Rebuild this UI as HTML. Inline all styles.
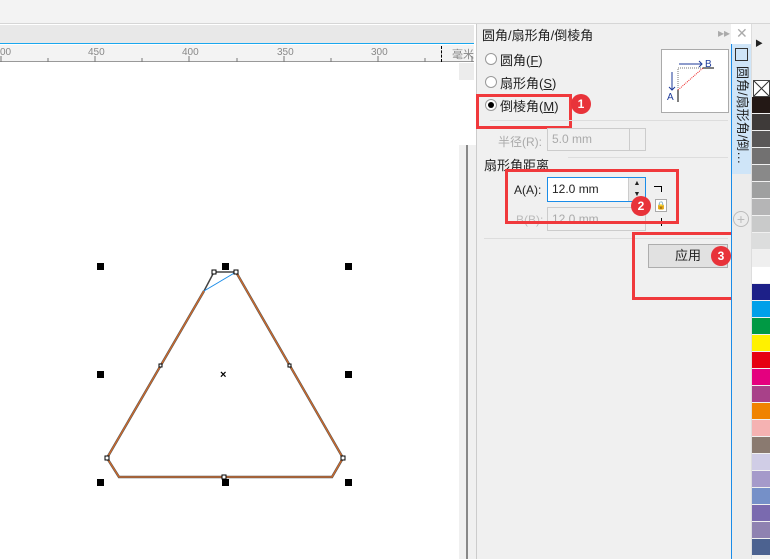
<!DOCTYPE html>
<html><head><meta charset="utf-8"><style>
*{margin:0;padding:0;box-sizing:border-box}
body{width:770px;height:559px;overflow:hidden;background:#fff;font-family:"Liberation Sans","Noto Sans CJK SC",sans-serif;font-size:12px;color:#222;position:relative}
.a{position:absolute}
.rb{border:3px solid #f0393c}
.badge{position:absolute;width:20px;height:20px;border-radius:50%;background:#e8333a;color:#fff;font-size:12px;text-align:center;line-height:20px;font-weight:bold}
.radio{position:absolute;width:12px;height:12px;border:1px solid #999;border-radius:50%;background:#fff}
.sw{position:absolute;left:752px;width:18px;height:16px}
</style></head><body>
<div class="a" style="left:0;top:0;width:770px;height:24px;background:#f3f3f3;border-bottom:1px solid #d6d6d6"></div>
<div class="a" style="left:0;top:25px;width:474px;height:19px;background:#e8e8e8;border-bottom:1px solid #1aa7ee"></div>
<div class="a" style="left:0;top:45px;width:474px;height:17px;background:#f3f3f3;border-bottom:1px solid #999"></div>
<div class="a" style="left:0;top:47px;font-size:10px;color:#888">00</div>
<div class="a" style="left:88px;top:47px;font-size:10px;color:#888">450</div>
<div class="a" style="left:182px;top:47px;font-size:10px;color:#888">400</div>
<div class="a" style="left:277px;top:47px;font-size:10px;color:#888">350</div>
<div class="a" style="left:371px;top:47px;font-size:10px;color:#888">300</div>
<div class="a" style="left:452px;top:46px;font-size:11px;color:#888">毫米</div>
<div class="a" style="left:441px;top:46px;height:16px;border-left:1px dashed #000"></div>
<svg class="a" style="left:0;top:55px" width="474" height="8"><g stroke="#777">
<line x1="1" y1="1" x2="1" y2="7"/><line x1="95" y1="1" x2="95" y2="7"/><line x1="189" y1="1" x2="189" y2="7"/><line x1="284" y1="1" x2="284" y2="7"/><line x1="378" y1="1" x2="378" y2="7"/><line x1="472" y1="1" x2="472" y2="7"/>
<line x1="48" y1="3" x2="48" y2="7"/><line x1="142" y1="3" x2="142" y2="7"/><line x1="237" y1="3" x2="237" y2="7"/><line x1="331" y1="3" x2="331" y2="7"/><line x1="425" y1="3" x2="425" y2="7"/></g></svg>
<div class="a" style="left:459px;top:63px;width:15px;height:17px;background:#ececec"></div>
<div class="a" style="left:459px;top:145px;width:17px;height:414px;background:#f0f0f0"></div>
<div class="a" style="left:466px;top:145px;width:2px;height:414px;background:#888"></div>
<svg class="a" style="left:0;top:0" width="460" height="559">
<g fill="#000"><rect x="97" y="263" width="7" height="7"/><rect x="222" y="263" width="7" height="7"/><rect x="345" y="263" width="7" height="7"/>
<rect x="97" y="371" width="7" height="7"/><rect x="345" y="371" width="7" height="7"/>
<rect x="97" y="479" width="7" height="7"/><rect x="222" y="479" width="7" height="7"/><rect x="345" y="479" width="7" height="7"/></g>
<path d="M236,272 L343,458 L332,477 L119,477 L107,458 L204,291" fill="none" stroke="#555" stroke-width="2.4"/>
<path d="M236,272 L343,458 L332,477 L119,477 L107,458 L204,291" fill="none" stroke="#d06a2a" stroke-width="1.3"/>
<path d="M204,291 L214,272 L236,272" fill="none" stroke="#444" stroke-width="1.5"/>
<line x1="204" y1="291" x2="236" y2="272" stroke="#1a8ce8" stroke-width="1"/>
<g fill="#fff" stroke="#000" stroke-width="1"><rect x="212" y="270" width="4" height="4"/><rect x="234" y="270" width="4" height="4"/><rect x="105" y="456" width="4" height="4"/><rect x="341" y="456" width="4" height="4"/><rect x="222" y="475" width="4" height="4"/><rect x="159" y="364" width="3" height="3"/><rect x="288" y="364" width="3" height="3"/></g>
<text x="220" y="378" font-size="11" font-weight="bold">×</text>
</svg>
<div class="a" style="left:476px;top:24px;width:255px;height:535px;background:#f0f0f0;border-left:1px solid #ccc"></div>
<div class="a" style="left:482px;top:25px;font-size:13px">圆角/扇形角/倒棱角</div>
<div class="a" style="left:718px;top:26px;font-size:12px;color:#aaa">▸▸</div>
<div class="a" style="left:736px;top:25px;font-size:14px;color:#aaa">✕</div>
<div class="radio" style="left:485px;top:53px"></div><div class="a" style="left:500px;top:50px;font-size:13px">圆角(<u>F</u>)</div>
<div class="radio" style="left:485px;top:76px"></div><div class="a" style="left:500px;top:73px;font-size:13px">扇形角(<u>S</u>)</div>
<div class="radio" style="left:485px;top:99px"></div><div class="a" style="left:488px;top:102px;width:6px;height:6px;border-radius:50%;background:#000"></div>
<div class="a" style="left:500px;top:96px;font-size:13px">倒棱角(<u>M</u>)</div>
<div class="a rb" style="left:476px;top:94px;width:96px;height:35px"></div>
<div class="badge" style="left:571px;top:94px">1</div>
<div class="a" style="left:661px;top:49px;width:68px;height:64px;background:#fff;border:1px solid #aaa"></div>
<svg class="a" style="left:662px;top:50px" width="66" height="62"><line x1="17" y1="14" x2="40" y2="14" stroke="#1d3a9a"/><path d="M37,11 L40,14 L37,17" fill="none" stroke="#1d3a9a"/>
<text x="43" y="17" font-size="10" fill="#1d3a9a">B</text><line x1="41" y1="18" x2="52" y2="18" stroke="#000"/>
<line x1="10" y1="22" x2="10" y2="40" stroke="#1d3a9a"/><path d="M7,37 L10,40 L13,37" fill="none" stroke="#1d3a9a"/>
<text x="5" y="50" font-size="10" fill="#1d3a9a">A</text><line x1="16" y1="40" x2="16" y2="52" stroke="#000"/>
<path d="M16,40 L16,18 L41,18" fill="none" stroke="#777" stroke-dasharray="1,1"/><line x1="16" y1="40" x2="41" y2="18" stroke="#e22" stroke-dasharray="1,1"/></svg>
<div class="a" style="left:490px;top:120px;width:238px;border-top:1px solid #ddd"></div>
<div class="a" style="left:498px;top:133px;font-size:12px;color:#aaa">半径(R):</div>
<div class="a" style="left:547px;top:128px;width:99px;height:23px;border:1px solid #ccc;background:#f0f0f0;color:#aaa;padding:3px 0 0 4px">5.0 mm</div>
<div class="a" style="left:629px;top:128px;height:23px;border-left:1px solid #ccc"></div>
<div class="a" style="left:568px;top:157px;width:160px;border-top:1px solid #ddd"></div>
<div class="a" style="left:484px;top:155px;font-size:13px">扇形角距离</div>
<div class="a" style="left:514px;top:183px;font-size:12px">A(A):</div>
<div class="a" style="left:547px;top:177px;width:99px;height:25px;border:1px solid #1a8ce8;background:#fff;padding:4px 0 0 4px">12.0 mm</div>
<div class="a" style="left:628px;top:178px;width:17px;height:23px;background:#e8e8e8;border-left:1px solid #ccc;font-size:7px;text-align:center;line-height:11px">▲<br>▼</div>
<div class="a" style="left:516px;top:213px;font-size:12px;color:#bbb">B(B):</div>
<div class="a" style="left:547px;top:207px;width:99px;height:24px;border:1px solid #ccc;color:#aaa;padding:4px 0 0 4px">12.0 mm</div>
<div class="a" style="left:654px;top:186px;width:8px;height:6px;border-top:1px solid #000;border-right:1px solid #000"></div>
<div class="a" style="left:655px;top:199px;width:12px;height:13px;border:1px solid #aaa;background:#fff;font-size:8px;text-align:center;line-height:11px">🔒</div>
<div class="a" style="left:661px;top:218px;height:8px;border-left:1px solid #000"></div>
<div class="a rb" style="left:505px;top:169px;width:174px;height:55px"></div>
<div class="badge" style="left:631px;top:196px">2</div>
<div class="a" style="left:484px;top:238px;width:244px;border-top:1px solid #ddd"></div>
<div class="a" style="left:648px;top:244px;width:80px;height:24px;border:1px solid #adadad;background:#e1e1e1;text-align:center;line-height:22px;font-size:13px">应用</div>
<div class="a rb" style="left:632px;top:232px;width:109px;height:68px"></div>
<div class="badge" style="left:711px;top:246px">3</div>
<div class="a" style="left:731px;top:44px;width:20px;height:515px;background:#ececec;border-left:1px solid #1a8ce8"></div>
<div class="a" style="left:732px;top:44px;width:19px;height:130px;background:#cfe5f8"></div>
<div class="a" style="left:735px;top:48px;width:13px;height:13px;border:1px solid #333"></div>
<div class="a" style="left:733px;top:66px;width:18px;writing-mode:vertical-rl;text-orientation:sideways;font-size:13px;line-height:18px">圆角/扇形角/倒…</div>
<div class="a" style="left:733px;top:211px;width:16px;height:16px;border:1px solid #bbb;border-radius:50%;color:#bbb;text-align:center;line-height:14px;font-size:14px">+</div>
<div class="a" style="left:751px;top:24px;width:19px;height:535px;background:#f0f0f0;border-left:1px solid #ddd"></div>
<div class="a" style="left:755px;top:38px;font-size:8px">▶</div>
<div class="a" style="left:753px;top:80px;width:17px;height:17px;background:#fff;border:1px solid #444"></div>
<svg class="a" style="left:753px;top:80px" width="17" height="17"><path d="M1,1L16,16M16,1L1,16" stroke="#333"/></svg>
<div class="sw" style="top:97px;background:#231815"></div><div class="sw" style="top:114px;background:#3e3a39"></div><div class="sw" style="top:131px;background:#595757"></div><div class="sw" style="top:148px;background:#727171"></div><div class="sw" style="top:165px;background:#898989"></div><div class="sw" style="top:182px;background:#9fa0a0"></div><div class="sw" style="top:199px;background:#b5b5b6"></div><div class="sw" style="top:216px;background:#c9caca"></div><div class="sw" style="top:233px;background:#dcdddd"></div><div class="sw" style="top:250px;background:#efefef"></div><div class="sw" style="top:267px;background:#fff"></div><div class="sw" style="top:284px;background:#1d2088"></div><div class="sw" style="top:301px;background:#00a0e9"></div><div class="sw" style="top:318px;background:#009944"></div><div class="sw" style="top:335px;background:#fff100"></div><div class="sw" style="top:352px;background:#e60012"></div><div class="sw" style="top:369px;background:#e4007f"></div><div class="sw" style="top:386px;background:#a84189"></div><div class="sw" style="top:403px;background:#f08300"></div><div class="sw" style="top:420px;background:#f5b2b2"></div><div class="sw" style="top:437px;background:#8a7a70"></div><div class="sw" style="top:454px;background:#d0cde6"></div><div class="sw" style="top:471px;background:#a59aca"></div><div class="sw" style="top:488px;background:#7590c8"></div><div class="sw" style="top:505px;background:#7a6aaf"></div><div class="sw" style="top:522px;background:#8f82b1"></div><div class="sw" style="top:539px;background:#4c6290"></div>
</body></html>
